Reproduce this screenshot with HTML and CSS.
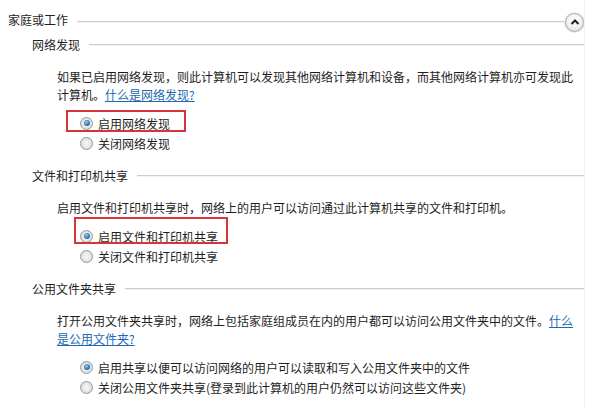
FILE: index.html
```html
<!DOCTYPE html>
<html lang="zh-CN">
<head>
    <meta charset="UTF-8">
    <meta name="viewport" content="width=device-width, initial-scale=1.0">
    <title>高级共享设置</title>
    <link rel="stylesheet" href="styles.css">
</head>
<body>
    <div class="panel">
        <!-- 家庭或工作 -->
        <div class="group-head">
            <span class="group-title">家庭或工作</span>
            <span class="rule"></span>
            <button class="collapse" type="button" aria-label="折叠">
                <svg width="10" height="8" viewBox="0 0 10 8"><path d="M1.5 6 L5 2.5 L8.5 6" fill="none" stroke="#1e1e1e" stroke-width="2"/></svg>
            </button>
        </div>

        <div class="section">
            <div class="section-head"><span>网络发现</span><span class="rule"></span></div>
            <p class="desc">如果已启用网络发现，则此计算机可以发现其他网络计算机和设备，而其他网络计算机亦可发现此计算机。<a href="#">什么是网络发现?</a></p>
            <div class="options">
                <label class="option marked mark-a"><span class="radio checked"></span>启用网络发现</label>
                <label class="option"><span class="radio"></span>关闭网络发现</label>
            </div>
        </div>

        <div class="section">
            <div class="section-head"><span>文件和打印机共享</span><span class="rule"></span></div>
            <p class="desc">启用文件和打印机共享时，网络上的用户可以访问通过此计算机共享的文件和打印机。</p>
            <div class="options">
                <label class="option marked mark-b"><span class="radio checked"></span>启用文件和打印机共享</label>
                <label class="option"><span class="radio"></span>关闭文件和打印机共享</label>
            </div>
        </div>

        <div class="section">
            <div class="section-head"><span>公用文件夹共享</span><span class="rule"></span></div>
            <p class="desc">打开公用文件夹共享时，网络上包括家庭组成员在内的用户都可以访问公用文件夹中的文件。<a href="#">什么是公用文件夹?</a></p>
            <div class="options">
                <label class="option"><span class="radio checked"></span>启用共享以便可以访问网络的用户可以读取和写入公用文件夹中的文件</label>
                <label class="option"><span class="radio"></span>关闭公用文件夹共享(登录到此计算机的用户仍然可以访问这些文件夹)</label>
            </div>
        </div>
    </div>
</body>
</html>
```

FILE: styles.css
```css
body {
    margin: 0;
    background-color: #fff;
    font-family: "Microsoft YaHei", "Noto Sans CJK SC", sans-serif;
    font-size: 12px;
    color: #1e1e1e;
}

.panel {
    width: 585px;
    min-height: 408px;
    padding: 11px 0 0 8px;
    box-sizing: border-box;
    border-right: 1px solid #f2f2f2;
}

/* group and section headings with a rule */
.group-head,
.section-head {
    display: flex;
    align-items: center;
    height: 18px;
    line-height: 18px;
}

.rule {
    flex: 1;
    height: 0;
    border-top: 1px solid #cdcdcd;
    border-bottom: 1px solid #f3f3f3;
    margin-left: 9px;
}

.group-head .rule {
    margin-top: 3px;
}

.collapse {
    width: 19px;
    height: 19px;
    margin: 4px 0 0 1px;
    padding: 0;
    border: 1px solid #a9a9a9;
    border-radius: 50%;
    background: radial-gradient(circle at 50% 35%, #ffffff 0%, #f1f1f1 50%, #d9d9d9 100%);
    display: flex;
    align-items: center;
    justify-content: center;
    box-shadow: 0 0 0 1px #ececec;
}

.section {
    margin-left: 24px;
    margin-top: 7px;
}

.section + .section {
    margin-top: 14px;
}

.desc {
    margin: 14px 0 9px 25px;
    line-height: 18px;
    width: 520px;
}

.desc a {
    color: #1d69b3;
    text-decoration: underline;
}

.options {
    margin-left: 48px;
}

.option {
    display: flex;
    align-items: center;
    width: fit-content;
    height: 20px;
    position: relative;
}

/* windows style radio */
.radio {
    width: 11px;
    height: 11px;
    border: 1px solid #979797;
    border-radius: 50%;
    margin-right: 5px;
    background: radial-gradient(circle at 50% 50%, #f8f8f8 0%, #e3e3e3 60%, #cfcfcf 100%);
    display: flex;
    align-items: center;
    justify-content: center;
    flex-shrink: 0;
}

.radio.checked::after {
    content: "";
    width: 6px;
    height: 6px;
    border-radius: 50%;
    background: radial-gradient(circle at 40% 35%, #9fd3f5 0%, #3b87c4 45%, #154c7a 100%);
}

/* red highlight boxes */
.marked::after {
    content: "";
    position: absolute;
    border: 2px solid #d8323c;
}

.mark-a::after {
    left: -14px;
    right: -16px;
    top: -3px;
    bottom: 1px;
}

.mark-b::after {
    left: -6px;
    right: -10px;
    top: -9px;
    bottom: 2px;
}
```
